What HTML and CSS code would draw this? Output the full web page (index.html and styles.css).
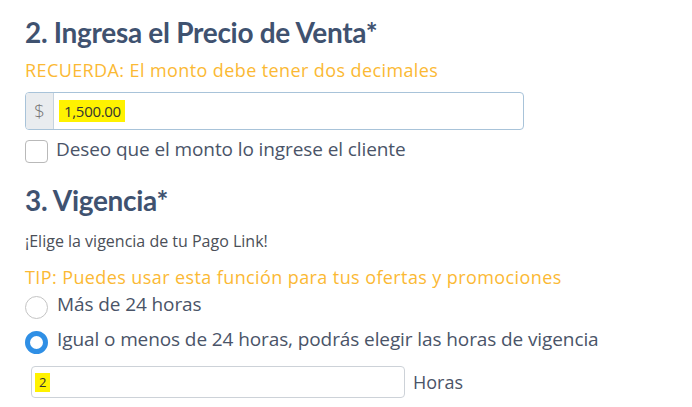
FILE: index.html
```html
<!DOCTYPE html>
<html lang="es">
<head>
<meta charset="utf-8">
<link rel="stylesheet" href="styles.css">
</head>
<body>
<div class="page">
  <h2 class="title">2. Ingresa el Precio de Venta*</h2>
  <p class="note">RECUERDA: El monto debe tener dos decimales</p>
  <div class="input-group">
    <span class="addon">$</span>
    <div class="field"><mark class="hl">1,500.00</mark></div>
  </div>
  <label class="check"><span class="box"></span><span class="lbl">Deseo que el monto lo ingrese el cliente</span></label>

  <h2 class="title title2">3. Vigencia*</h2>
  <p class="desc">¡Elige la vigencia de tu Pago Link!</p>
  <p class="note tip">TIP: Puedes usar esta función para tus ofertas y promociones</p>
  <label class="radio"><span class="ring"></span><span class="lbl">Más de 24 horas</span></label>
  <label class="radio radio2"><span class="ring on"></span><span class="lbl">Igual o menos de 24 horas, podrás elegir las horas de vigencia</span></label>
  <div class="hours">
    <div class="field small"><mark class="hl hl-sm">2</mark></div>
    <span class="unit">Horas</span>
  </div>
</div>
</body>
</html>
```
FILE: styles.css
```css
html, body {
  margin: 0;
  padding: 0;
  background: #ffffff;
}
.page {
  padding: 15px 0 0 25px;
  font-family: "Open Sans", sans-serif;
  color: #4a5468;
}
.title {
  margin: 0;
  font-family: "Lato", sans-serif;
  font-weight: 700;
  font-size: 28px;
  letter-spacing: -0.3px;
  line-height: 34px;
  color: #3f5270;
}
.note {
  margin: 9px 0 0;
  font-size: 18px;
  letter-spacing: 0.4px;
  line-height: 24px;
  color: #fbb934;
}
.input-group {
  margin-top: 10px;
  width: 499px;
  height: 38px;
  display: flex;
  border: 1px solid #a8c3d9;
  border-radius: 4px;
  box-sizing: border-box;
  overflow: hidden;
}
.addon {
  width: 27px;
  background: #e9ecef;
  border-right: 1px solid #c6d3df;
  display: flex;
  align-items: center;
  justify-content: center;
  font-family: "Open Sans", sans-serif;
  font-size: 19px;
  font-weight: 300;
  color: #777;
}
.field {
  flex: 1;
  display: flex;
  align-items: center;
  padding-left: 5px;
}
.hl {
  background: #fff200;
  color: #333;
  font-family: "Open Sans", sans-serif;
  font-size: 15px;
  letter-spacing: -0.3px;
  line-height: 22px;
  padding: 0 4px 0 5px;
}
.check, .radio {
  display: flex;
  align-items: flex-start;
  font-size: 19px;
  letter-spacing: -0.1px;
  line-height: 22px;
  color: #4a5468;
}
.check {
  margin-top: 8px;
}
.box {
  width: 23px;
  height: 23px;
  box-sizing: border-box;
  border: 1px solid #b9b9b9;
  border-radius: 4px;
  flex: none;
  margin-right: 8px;
  margin-top: 2px;
}
.lbl {
  display: block;
}
.title2 {
  margin-top: 20px;
}
.desc {
  margin: 14px 0 0;
  font-size: 16px;
  line-height: 20px;
  color: #4b4f58;
}
.tip {
  margin-top: 14px;
}
.radio {
  margin-top: 5px;
}
.radio .lbl {
  margin-top: -1px;
}
.radio2 {
  margin-top: 10px;
}
.ring {
  width: 23px;
  height: 23px;
  box-sizing: border-box;
  border: 1px solid #c4c4c4;
  border-radius: 50%;
  flex: none;
  margin-right: 9px;
  margin-top: 2px;
}
.ring.on {
  border: 5px solid #2f8fe5;
}
.hours {
  margin: 12px 0 0 6px;
  display: flex;
  align-items: center;
}
.field.small {
  flex: none;
  width: 374px;
  height: 32px;
  box-sizing: border-box;
  border: 1px solid #cdd2d8;
  border-radius: 4px;
  padding-left: 3px;
}
.hl-sm {
  font-size: 13px;
  line-height: 19px;
  padding: 0 4px;
}
.unit {
  margin-left: 8px;
  font-size: 18px;
  color: #4a5468;
}
```
